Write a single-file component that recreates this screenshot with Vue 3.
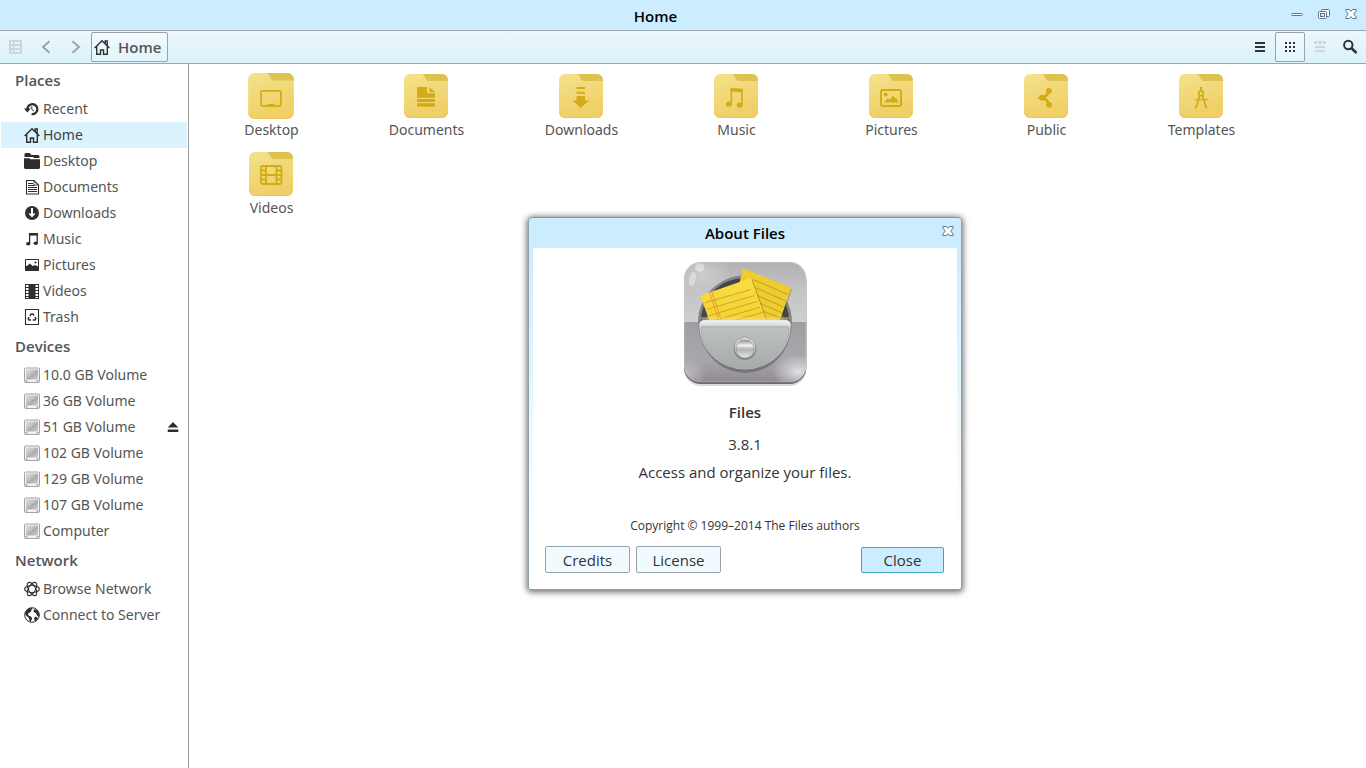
<template>
  <div class="window">
    <svg class="symbols" aria-hidden="true">
      <defs>
        <linearGradient id="folder-fill" x1="0" y1="0" x2="0.3" y2="1">
          <stop offset="0" stop-color="#f3e28c" />
          <stop offset="1" stop-color="#efcf66" />
        </linearGradient>
        <linearGradient id="drive-fill" x1="0" y1="0" x2="1" y2="1">
          <stop offset="0" stop-color="#dcdcdc" />
          <stop offset="0.48" stop-color="#bdbdbd" />
          <stop offset="0.52" stop-color="#a9a9a9" />
          <stop offset="1" stop-color="#cdcdcd" />
        </linearGradient>
      </defs>

      <symbol id="home" viewBox="0 0 16 16">
        <path d="M.6 8.9L8 1.7l7.4 7.2M2.7 7.5v7.8h3.8V11h3v4.3h3.8V7.5M11.2 4.5V2h2v4.4" fill="none" stroke="currentColor" stroke-width="1.4" />
      </symbol>
      <symbol id="recent" viewBox="0 0 16 16">
        <path d="M3.4 8.2a5 5 0 1 1 4.2 4.9" fill="none" stroke="currentColor" stroke-width="2.3" />
        <path d="M0 7.4h6.8l-3.4 4z" fill="currentColor" />
        <path d="M7.8 5.2v3.2L10 10" fill="none" stroke="currentColor" />
      </symbol>
      <symbol id="desktop" viewBox="0 0 16 16">
        <path d="M1.5 0H6l1 2h7.5l1 1v2H10L9 4H.5V1zM0 5.2h5.5l1 1H16V15l-1 1H1l-1-1z" fill="currentColor" />
      </symbol>
      <symbol id="documents" viewBox="0 0 16 16">
        <path d="M2.5 1.5H10L14.5 6v9h-12z" fill="none" stroke="currentColor" stroke-width="1.1" />
        <path d="M4 4.5h5M4 6.5h6.500M4 8.5h9M4 10.5h9M4 12.5h9" stroke="currentColor" />
        <path d="M10 1.5V6h4.5" fill="none" stroke="currentColor" stroke-width=".8" />
      </symbol>
      <symbol id="downloads" viewBox="0 0 16 16">
        <circle cx="8" cy="8" r="7" fill="currentColor" />
        <path d="M7 3h2v5.6h2.600L8 12.6l-3.600-4H7z" fill="#fff" />
      </symbol>
      <symbol id="music" viewBox="0 0 16 16">
        <path d="M5.6 12.5V3.2h7.600v8.300" fill="none" stroke="currentColor" stroke-width="1.3" />
        <path d="M5 2h9v2.600H5z" fill="currentColor" />
        <ellipse cx="4.2" cy="12.8" rx="2.2" ry="1.8" fill="currentColor" />
        <ellipse cx="11.8" cy="12.2" rx="2.2" ry="1.8" fill="currentColor" />
      </symbol>
      <symbol id="pictures" viewBox="0 0 16 16">
        <path d="M1.5 2.5h13v11h-13z" fill="none" stroke="currentColor" />
        <path d="M1 9.5l2.600-1L6 6.500l2.500 2.400L11 8l4 2v3.500H1z" fill="currentColor" />
        <circle cx="11.5" cy="5.5" r="1.1" fill="currentColor" />
      </symbol>
      <symbol id="videos" viewBox="0 0 16 16">
        <path d="M1 1h14v15H1z" fill="currentColor" />
        <path d="M2 2h2.500v2H2zM2 5h2.500v2H2zM2 8h2.500v2H2zM2 11h2.500v2H2zM2 14h2.500v1H2zM11.500 2H14v2h-2.500zM11.500 5H14v2h-2.500zM11.500 8H14v2h-2.500zM11.500 11H14v2h-2.500zM11.500 14H14v1h-2.500z" fill="#fff" />
      </symbol>
      <symbol id="trash" viewBox="0 0 16 16">
        <path d="M1.5.5h13v15h-13z" fill="none" stroke="currentColor" stroke-width="1.1" />
        <path d="M5.900 7l1.300-2.100h1.600L10 6.700M11 8l.8 1.600-.8 1.400H8.800M7 11H5l-.8-1.400.9-1.500" fill="none" stroke="currentColor" stroke-width="1.5" />
      </symbol>
      <symbol id="drive" viewBox="0 0 16 16">
        <rect x=".5" y="1" width="15" height="14.5" rx="1" fill="#f4f4f4" stroke="#a2a2a2" />
        <path d="M2 2.500h12v10H2z" fill="url(#drive-fill)" />
        <path d="M1.500 14h2M12.500 14h2" stroke="#777" />
      </symbol>
      <symbol id="network" viewBox="0 0 16 16">
        <g fill="none" stroke="currentColor" stroke-width="1.1">
          <ellipse cx="8" cy="8" rx="7.4" ry="3.5" />
          <ellipse cx="8" cy="8" rx="7.4" ry="3.5" transform="rotate(60 8 8)" />
          <ellipse cx="8" cy="8" rx="7.4" ry="3.5" transform="rotate(120 8 8)" />
        </g>
        <circle cx="8" cy="8" r="2.6" fill="#fff" />
      </symbol>
      <symbol id="server" viewBox="0 0 16 16">
        <circle cx="8" cy="8" r="7.3" fill="#fff" stroke="currentColor" />
        <path d="M2 4l3-2.800 3.500-.3L7.500 3l-.7 2L4 6.500l.5 2 2.800 1.200.8 2L6.500 15l-1-1-.5-3-3-2.500-1-2zM10 2l3.500 1.500L15.200 7v3L13 8.500 12 6 9.500 5zM11.500 9.500L14 11l-2.200 3-1.300-.5-.4-2.500z" fill="currentColor" />
      </symbol>
      <symbol id="eject" viewBox="0 0 16 16">
        <path d="M8 3l5.300 5.500H2.700zM2.700 10.500h10.600V13H2.700z" fill="currentColor" />
      </symbol>
      <symbol id="sidebar" viewBox="0 0 16 16">
        <path d="M1 1h13v14H1zM3 3v2h2V3zM6.500 3v2H12V3zM3 7v2h2V7zM6.500 7v2H12V7zM3 11v2h2v-2zM6.500 11v2H12v-2z" fill="currentColor" fill-rule="evenodd" />
      </symbol>
      <symbol id="back" viewBox="0 0 16 16">
        <path d="M11.5 2.300L5 8l6.500 5.700" fill="none" stroke="currentColor" stroke-width="1.8" />
      </symbol>
      <symbol id="forward" viewBox="0 0 16 16">
        <path d="M4.5 2.300L11 8l-6.500 5.700" fill="none" stroke="currentColor" stroke-width="1.8" />
      </symbol>
      <symbol id="list" viewBox="0 0 16 16">
        <path d="M3 3h10v2H3zM3 7h10v2H3zM3 11h10v2H3z" fill="currentColor" />
      </symbol>
      <symbol id="grid" viewBox="0 0 16 16">
        <path d="M3 3h2v2H3zM7 3h2v2H7zM11 3h2v2h-2zM3 7h2v2H3zM7 7h2v2H7zM11 7h2v2h-2zM3 11h2v2H3zM7 11h2v2H7zM11 11h2v2h-2z" fill="currentColor" />
      </symbol>
      <symbol id="compact" viewBox="0 0 16 16">
        <path d="M2 2h3v3H2zM6 2h4v3H6zM11 2h3v3h-3zM3 7h10v2H3zM3 11h10v2H3z" fill="currentColor" />
      </symbol>
      <symbol id="search" viewBox="0 0 16 16">
        <circle cx="6.3" cy="6" r="4.2" fill="none" stroke="currentColor" stroke-width="2" />
        <path d="M9.300 9l5.200 5" stroke="currentColor" stroke-width="2.6" />
      </symbol>
      <symbol id="minimize" viewBox="0 0 12 12">
        <rect x=".5" y="5.5" width="11" height="2" rx="1" fill="#fff" stroke="#5f7288" />
      </symbol>
      <symbol id="restore" viewBox="0 0 12 12">
        <g fill="#fff" stroke="#5f7288">
          <rect x="3.5" y="1.5" width="8" height="7" rx="1" />
          <rect x=".5" y="3.5" width="8" height="7" rx="1" />
          <rect x="2.5" y="5.5" width="4" height="3" fill="#cdefff" />
        </g>
      </symbol>
      <symbol id="close" viewBox="0 0 12 12">
        <path d="M.8 1.500h3.600L6 3.400l1.600-1.900h3.600v1.300L8.700 6l2.500 3.200v1.300H7.600L6 8.600l-1.600 1.900H.8V9.200L3.300 6 .8 2.800z" fill="#fff" stroke="#5f7288" stroke-linejoin="round" />
      </symbol>

      <symbol id="folder" viewBox="0 0 44 44">
        <rect width="44" height="44" rx="6" fill="url(#folder-fill)" />
        <path d="M18 0h20a6 6 0 0 1 6 6v1H25c-2 0-2.700-1-3.400-2.500C20.800 2.500 20 .5 18 0z" fill="#dfc150" />
        <path d="M1 38a5 5 0 0 0 5 5.500h32a5 5 0 0 0 5-5.500" fill="none" stroke="#e6c25e" stroke-width=".8" />
      </symbol>
      <symbol id="emblem-desktop" viewBox="0 0 44 44">
        <rect x="12.5" y="17" width="19" height="14.5" rx="1" fill="none" stroke="currentColor" stroke-width="1.6" />
        <path d="M16 32c1-2 3-2.400 6-2.400s5 .4 6 2.400z" fill="currentColor" />
      </symbol>
      <symbol id="emblem-documents" viewBox="0 0 44 44">
        <path d="M14.500 13H23v4.500c0 1.200.6 1.800 1.800 1.800H31v4.500H13v-9.500c0-.8.600-1.300 1.500-1.300zM25.500 13l5.500 5h-4.500c-.6 0-1-.3-1-1zM13 25h18v3H13zM13 29.300h18v2.200c0 .8-.6 1.300-1.300 1.300H14.300c-.8 0-1.300-.5-1.300-1.300z" fill="currentColor" />
      </symbol>
      <symbol id="emblem-downloads" viewBox="0 0 44 44">
        <path d="M17.500 13H26v2h-8.500zM17.500 17.700H26v2h-8.500zM17.500 22H26v4.500h4L21.700 34l-8-7.500h3.800z" fill="currentColor" />
      </symbol>
      <symbol id="emblem-music" viewBox="0 0 44 44">
        <path d="M17.300 29.500v-14L28 16.200v14.300" fill="none" stroke="currentColor" stroke-width="1.6" />
        <path d="M16.500 14l12.300.8v3.400l-12.300-.8z" fill="currentColor" />
        <ellipse cx="15" cy="30" rx="3" ry="2.6" fill="currentColor" />
        <ellipse cx="25.7" cy="31" rx="3" ry="2.6" fill="currentColor" />
      </symbol>
      <symbol id="emblem-pictures" viewBox="0 0 44 44">
        <rect x="12" y="16" width="20" height="16" rx="1.5" fill="none" stroke="currentColor" stroke-width="1.9" />
        <circle cx="16.7" cy="20.5" r="2" fill="currentColor" />
        <path d="M15 28.500l3.800-4.300 2 1.500 3.200-4.200 2.300 3 1-.5 2.200 4.500z" fill="currentColor" />
      </symbol>
      <symbol id="emblem-public" viewBox="0 0 44 44">
        <path d="M25 16.500c-.8 3.500-2.500 6-7 7.200 4.500 1.200 6.200 3.700 7 7.300" fill="none" stroke="currentColor" stroke-width="2.8" />
        <circle cx="25" cy="16.8" r="2.9" fill="currentColor" />
        <circle cx="18" cy="23.7" r="2.9" fill="currentColor" />
        <circle cx="25" cy="30.8" r="2.9" fill="currentColor" />
      </symbol>
      <symbol id="emblem-templates" viewBox="0 0 44 44">
        <g fill="none" stroke="currentColor">
          <path d="M22 13v4" stroke-width="2" />
          <circle cx="22" cy="19.3" r="2.4" stroke-width="1.8" />
          <path d="M20.700 21.500l-3.900 13M23.300 21.500l4.300 13" stroke-width="1.8" />
          <path d="M15.700 25.700h13" stroke-width="1.2" />
        </g>
      </symbol>
      <symbol id="emblem-videos" viewBox="0 0 44 44">
        <g fill="none" stroke="currentColor" stroke-width="1.8">
          <rect x="12" y="14" width="20.5" height="18" rx="1.5" />
          <path d="M17 14v18M27.500 14v18M17 23h10.500M12 18.500h5M12 23h5M12 27.500h5M27.500 18.500h5M27.500 23h5M27.500 27.500h5" />
        </g>
      </symbol>
    </svg>

    <header class="titlebar">
      <h1 class="titlebar-text">Home</h1>
      <div class="controls">
        <button v-for="name in controls" :key="name" class="control" type="button" :aria-label="name">
          <svg width="12" height="12"><use :href="'#' + name" /></svg>
        </button>
      </div>
    </header>

    <nav class="toolbar">
      <button class="tool faint" type="button" aria-label="sidebar" disabled>
        <svg width="16" height="16"><use href="#sidebar" /></svg>
      </button>
      <button class="tool muted" type="button" aria-label="back">
        <svg width="16" height="16"><use href="#back" /></svg>
      </button>
      <button class="tool muted" type="button" aria-label="forward">
        <svg width="16" height="16"><use href="#forward" /></svg>
      </button>
      <button class="path" type="button">
        <svg width="16" height="16"><use href="#home" /></svg>
        <span>Home</span>
      </button>
      <div class="views">
        <button
          v-for="item in views"
          :key="item.icon"
          class="tool"
          :class="{ framed: view === item.icon, faint: item.disabled }"
          type="button"
          :aria-label="item.icon"
          :disabled="item.disabled"
          @click="view = item.icon"
        >
          <svg width="16" height="16"><use :href="'#' + item.icon" /></svg>
        </button>
        <button class="tool" type="button" aria-label="search">
          <svg width="16" height="16"><use href="#search" /></svg>
        </button>
      </div>
    </nav>

    <div class="main">
      <aside class="sidebar">
        <section v-for="group in groups" :key="group.title">
          <h2 class="group-title">{{ group.title }}</h2>
          <ul class="group-list">
            <li
              v-for="item in group.items"
              :key="item.label"
              class="place"
              :class="{ active: item.label === current }"
            >
              <a class="place-link" href="#" @click.prevent="current = item.label">
                <svg width="16" height="16"><use :href="'#' + item.icon" /></svg>
                <span>{{ item.label }}</span>
              </a>
              <button v-if="item.eject" class="eject" type="button" aria-label="eject">
                <svg width="16" height="16"><use href="#eject" /></svg>
              </button>
            </li>
          </ul>
        </section>
      </aside>

      <main class="files">
        <a v-for="name in folders" :key="name" class="file" href="#" @click.prevent>
          <svg class="file-icon" :class="{ hovered: name === 'Desktop' }" width="44" height="44" viewBox="0 0 44 44">
            <use href="#folder" />
            <use :href="'#emblem-' + name.toLowerCase()" />
          </svg>
          <span class="file-name">{{ name }}</span>
        </a>
      </main>
    </div>

    <div v-if="aboutOpen" class="dialog" role="dialog" aria-labelledby="about-title">
      <div class="dialog-bar">
        <h2 id="about-title" class="dialog-title">About Files</h2>
        <button class="dialog-close" type="button" aria-label="close" @click="aboutOpen = false">
          <svg width="12" height="12"><use href="#close" /></svg>
        </button>
      </div>
      <div class="dialog-body">
        <svg class="app-icon" width="124" height="126" viewBox="39 33 372 378">
          <defs>
            <linearGradient id="body-fill" x1="0" y1="0" x2="0" y2="1">
              <stop offset="0" stop-color="#b2b2b2" />
              <stop offset=".25" stop-color="#c4c4c4" />
              <stop offset=".5" stop-color="#cfcfcf" />
              <stop offset=".5" stop-color="#a09ea3" />
              <stop offset=".8" stop-color="#a9a7ac" />
              <stop offset="1" stop-color="#918b94" />
            </linearGradient>
            <radialGradient id="corner-glow">
              <stop offset="0" stop-color="#fff" stop-opacity=".7" />
              <stop offset="1" stop-color="#fff" stop-opacity="0" />
            </radialGradient>
            <linearGradient id="paper-fill" x1="0" y1="0" x2="0" y2="1">
              <stop offset="0" stop-color="#f9dd44" />
              <stop offset="1" stop-color="#f6d030" />
            </linearGradient>
            <linearGradient id="pocket-fill" x1="0" y1="0" x2="0" y2="1">
              <stop offset="0" stop-color="#bdc1c0" />
              <stop offset="1" stop-color="#a6abaa" />
            </linearGradient>
            <linearGradient id="lip-fill" x1="0" y1="0" x2="0" y2="1">
              <stop offset="0" stop-color="#f4f4f2" />
              <stop offset="1" stop-color="#c5c8c7" />
            </linearGradient>
            <linearGradient id="knob-fill" x1="0" y1="0" x2="0" y2="1">
              <stop offset="0" stop-color="#8d8d8d" />
              <stop offset=".3" stop-color="#f2f2f2" />
              <stop offset=".52" stop-color="#b2b2b2" />
              <stop offset="1" stop-color="#e8e8e8" />
            </linearGradient>
            <clipPath id="body-clip">
              <rect x="42" y="36" width="367" height="361" rx="50" />
            </clipPath>
          </defs>
          <rect x="42" y="47" width="367" height="361" rx="50" fill="#000" opacity=".15" />
          <rect x="42" y="41" width="367" height="361" rx="50" fill="#6d6970" />
          <rect x="42" y="36" width="367" height="361" rx="50" fill="url(#body-fill)" />
          <g clip-path="url(#body-clip)">
            <ellipse cx="385" cy="365" rx="80" ry="50" fill="url(#corner-glow)" />
            <ellipse cx="50" cy="370" rx="60" ry="45" fill="url(#corner-glow)" opacity=".5" />
            <ellipse cx="100" cy="70" rx="90" ry="60" fill="url(#corner-glow)" opacity=".4" />
          </g>
          <rect x="44" y="38" width="363" height="357" rx="48" fill="none" stroke="#d9d9d9" stroke-opacity=".25" stroke-width="3" />
          <ellipse cx="89" cy="52" rx="14" ry="13" fill="#fff" opacity=".4" />
          <ellipse cx="67" cy="88" rx="10" ry="22" fill="#fff" opacity=".35" transform="rotate(12 67 88)" />
          <circle cx="225" cy="217" r="141" fill="#858786" />
          <circle cx="225" cy="217" r="133" fill="#454646" />
          <circle cx="225" cy="225" r="118" fill="#6d6e6d" />
          <path d="M219 55l145 58-36 104H180z" fill="#000" opacity=".2" transform="translate(2 5)" />
          <path d="M219 55l145 58-36 104H180z" fill="#efcb30" />
          <g fill="none" stroke-width="2">
            <path d="M250 89l105 45M256 113l92 40M263 137l78 34M270 160l66 28M280 184l50 20" stroke="#a58b26" />
            <path d="M91 137l152-53 48 133H120z" fill="#000" stroke="none" opacity=".25" transform="translate(4 3)" />
            <path d="M91 137l152-53 48 133H120z" fill="url(#paper-fill)" />
            <path d="M105 158l137-39M111 178l142-41M117 197l145-43M124 214l146-42M190 212l89-25" stroke="#ad9123" />
            <path d="M119 130l29 86M126 127l28 85" stroke="#e5802c" />
          </g>
          <path d="M90 202h270l-12 15H102z" fill="#f4e28b" opacity=".45" />
          <path d="M90 227h272a136 136 0 0 1-272 0z" fill="#4e504f" opacity=".5" transform="translate(0 5)" />
          <path d="M88 226c0-10 6-15 14-15h246c8 0 14 5 14 15a137 132 0 0 1-274 0z" fill="#d5d8d7" />
          <path d="M92 230h266a133 127 0 0 1-266 0z" fill="url(#pocket-fill)" stroke="#9da2a1" stroke-width="2" />
          <path d="M88 226c0-10 6-15 14-15h246c8 0 14 5 14 15l-2 12c-4-10-8-13-16-13H106c-8 0-12 3-16 13z" fill="url(#lip-fill)" />
          <circle cx="225" cy="296" r="34" fill="#838887" />
          <circle cx="225" cy="293" r="31" fill="#cfd1d0" />
          <path d="M213 272a12 12 0 0 1 24 0" fill="#dcdcdc" stroke="#8a8a8a" stroke-width="2" />
          <circle cx="225" cy="297" r="27" fill="url(#knob-fill)" stroke="#929292" stroke-width="2" />
        </svg>
        <h3 class="app-name">Files</h3>
        <p class="version">3.8.1</p>
        <p class="summary">Access and organize your files.</p>
        <p class="copyright">Copyright © 1999–2014 The Files authors</p>
        <div class="actions">
          <button class="action" type="button">Credits</button>
          <button class="action" type="button">License</button>
          <button class="action primary" type="button" @click="aboutOpen = false">Close</button>
        </div>
      </div>
    </div>
  </div>
</template>

<script setup>
import { ref } from 'vue'

const controls = ['minimize', 'restore', 'close']

const views = [
  { icon: 'list' },
  { icon: 'grid' },
  { icon: 'compact', disabled: true }
]

const groups = [
  {
    title: 'Places',
    items: [
      { label: 'Recent', icon: 'recent' },
      { label: 'Home', icon: 'home' },
      { label: 'Desktop', icon: 'desktop' },
      { label: 'Documents', icon: 'documents' },
      { label: 'Downloads', icon: 'downloads' },
      { label: 'Music', icon: 'music' },
      { label: 'Pictures', icon: 'pictures' },
      { label: 'Videos', icon: 'videos' },
      { label: 'Trash', icon: 'trash' }
    ]
  },
  {
    title: 'Devices',
    items: [
      { label: '10.0 GB Volume', icon: 'drive' },
      { label: '36 GB Volume', icon: 'drive' },
      { label: '51 GB Volume', icon: 'drive', eject: true },
      { label: '102 GB Volume', icon: 'drive' },
      { label: '129 GB Volume', icon: 'drive' },
      { label: '107 GB Volume', icon: 'drive' },
      { label: 'Computer', icon: 'drive' }
    ]
  },
  {
    title: 'Network',
    items: [
      { label: 'Browse Network', icon: 'network' },
      { label: 'Connect to Server', icon: 'server' }
    ]
  }
]

const folders = ['Desktop', 'Documents', 'Downloads', 'Music', 'Pictures', 'Public', 'Templates', 'Videos']

const current = ref('Home')
const view = ref('grid')
const aboutOpen = ref(true)
</script>

<style>
body {
  margin: 0;
}
</style>

<style scoped>
.window {
  position: relative;
  display: flex;
  flex-direction: column;
  min-height: 100vh;
  background: #fff;
  color: #555;
  font: 14px/20px "Noto Sans", "Open Sans", sans-serif;
}

.symbols {
  position: absolute;
  width: 0;
  height: 0;
}

svg {
  display: block;
  flex: none;
}

h1,
h2,
h3,
p,
ul {
  margin: 0;
  padding: 0;
}

h1,
h2,
h3 {
  font-family: "Open Sans", "Noto Sans", sans-serif;
  font-size: 15px;
  font-weight: 600;
}

ul {
  list-style: none;
}

a {
  color: inherit;
  text-decoration: none;
}

button {
  box-sizing: border-box;
  margin: 0;
  padding: 0;
  border: 0;
  background: none;
  color: inherit;
  font: inherit;
}

.titlebar {
  display: flex;
  align-items: center;
  height: 30px;
  background: #cbedff;
}

.titlebar-text {
  flex: 1;
  padding: 2px 0 0 28px;
  color: #000;
  text-align: center;
}

.controls {
  display: flex;
  align-self: flex-start;
  padding-right: 2px;
}

.control {
  display: flex;
  align-items: center;
  justify-content: center;
  width: 27px;
  height: 28px;
}

.toolbar {
  display: flex;
  align-items: center;
  box-sizing: border-box;
  height: 34px;
  padding: 0 1px;
  border-top: 1px solid #9aa9b1;
  border-bottom: 1px solid #9aa9b1;
  background: linear-gradient(#ecf8fd, #dbf2fa);
}

.tool {
  display: flex;
  align-items: center;
  justify-content: center;
  width: 30px;
  height: 30px;
  color: #2e3436;
}

.muted {
  color: #9a9fa1;
}

.faint {
  color: #cfd6d9;
}

.framed,
.path {
  border: 1px solid #9aa3a8;
  border-radius: 2px;
  background: linear-gradient(#f2fafe, #e2f5fc);
}

.path {
  display: flex;
  align-items: center;
  gap: 8px;
  height: 30px;
  padding: 0 6px 0 2px;
  color: #2e3436;
  font-family: "Open Sans", "Noto Sans", sans-serif;
  font-size: 15px;
  font-weight: 600;
}

.path span {
  color: #555;
}

.views {
  display: flex;
  margin-left: auto;
}

.main {
  display: flex;
  flex: 1;
}

.sidebar {
  flex: none;
  box-sizing: border-box;
  width: 189px;
  border-right: 1px solid #9d9d9d;
}

.group-title {
  padding: 6px 0 6px 15px;
}

.place {
  display: flex;
  align-items: center;
  margin: 0 1px;
  padding-right: 6px;
}

.place-link {
  display: flex;
  flex: 1;
  align-items: center;
  gap: 3px;
  height: 26px;
  padding-left: 23px;
}

.place-link svg,
.eject {
  color: #2e2e2e;
}

.active {
  background: #dbf3ff;
  color: #3a3f42;
}

.files {
  display: grid;
  flex: 1;
  grid-template-columns: repeat(auto-fill, 155px);
  grid-auto-rows: 78px;
  align-content: start;
  padding: 10px 0 0 4px;
}

.file {
  display: flex;
  flex-direction: column;
  align-items: center;
  gap: 2px;
}

.file-icon {
  color: #d2ab17;
}

.file-name {
  padding-left: 2px;
}

.hovered {
  transform: scale(1.04);
}

.dialog {
  position: absolute;
  top: 217px;
  left: 528px;
  box-sizing: border-box;
  width: 434px;
  padding: 0 4px;
  border: 1px solid #8fa0a9;
  border-top-color: #7f9aa6;
  border-radius: 4px 4px 3px 3px;
  background: linear-gradient(#cbedff 0, #cbedff 30px, #fff 320px);
  box-shadow: 0 1px 6px 1px rgba(0, 0, 0, 0.6);
  color: #333;
  font-family: "Open Sans", "Noto Sans", sans-serif;
  font-size: 15px;
}

.dialog-bar {
  display: flex;
  align-items: center;
  height: 30px;
}

.dialog-title {
  flex: 1;
  padding-left: 18px;
  color: #000;
  text-align: center;
}

.dialog-close {
  display: flex;
  align-items: center;
  align-self: flex-start;
  justify-content: center;
  width: 18px;
  height: 26px;
}

.dialog-body {
  display: flex;
  flex-direction: column;
  align-items: center;
  padding: 13px 12px 16px;
  background: #fff;
}

.app-name {
  margin-top: 15px;
}

.version {
  margin-top: 12px;
}

.summary {
  margin-top: 8px;
}

.copyright {
  margin-top: 34px;
  font-size: 12px;
}

.actions {
  display: flex;
  align-items: center;
  align-self: stretch;
  gap: 6px;
  margin-top: 10px;
  padding-right: 1px;
}

.action {
  width: 85px;
  height: 27px;
  border: 1px solid #9aa3a8;
  border-radius: 2px;
  background: #f0faff;
}

.primary {
  width: 83px;
  height: 26px;
  margin-left: auto;
  border-color: #3fa3cf;
  background: #cbedff;
}
</style>
